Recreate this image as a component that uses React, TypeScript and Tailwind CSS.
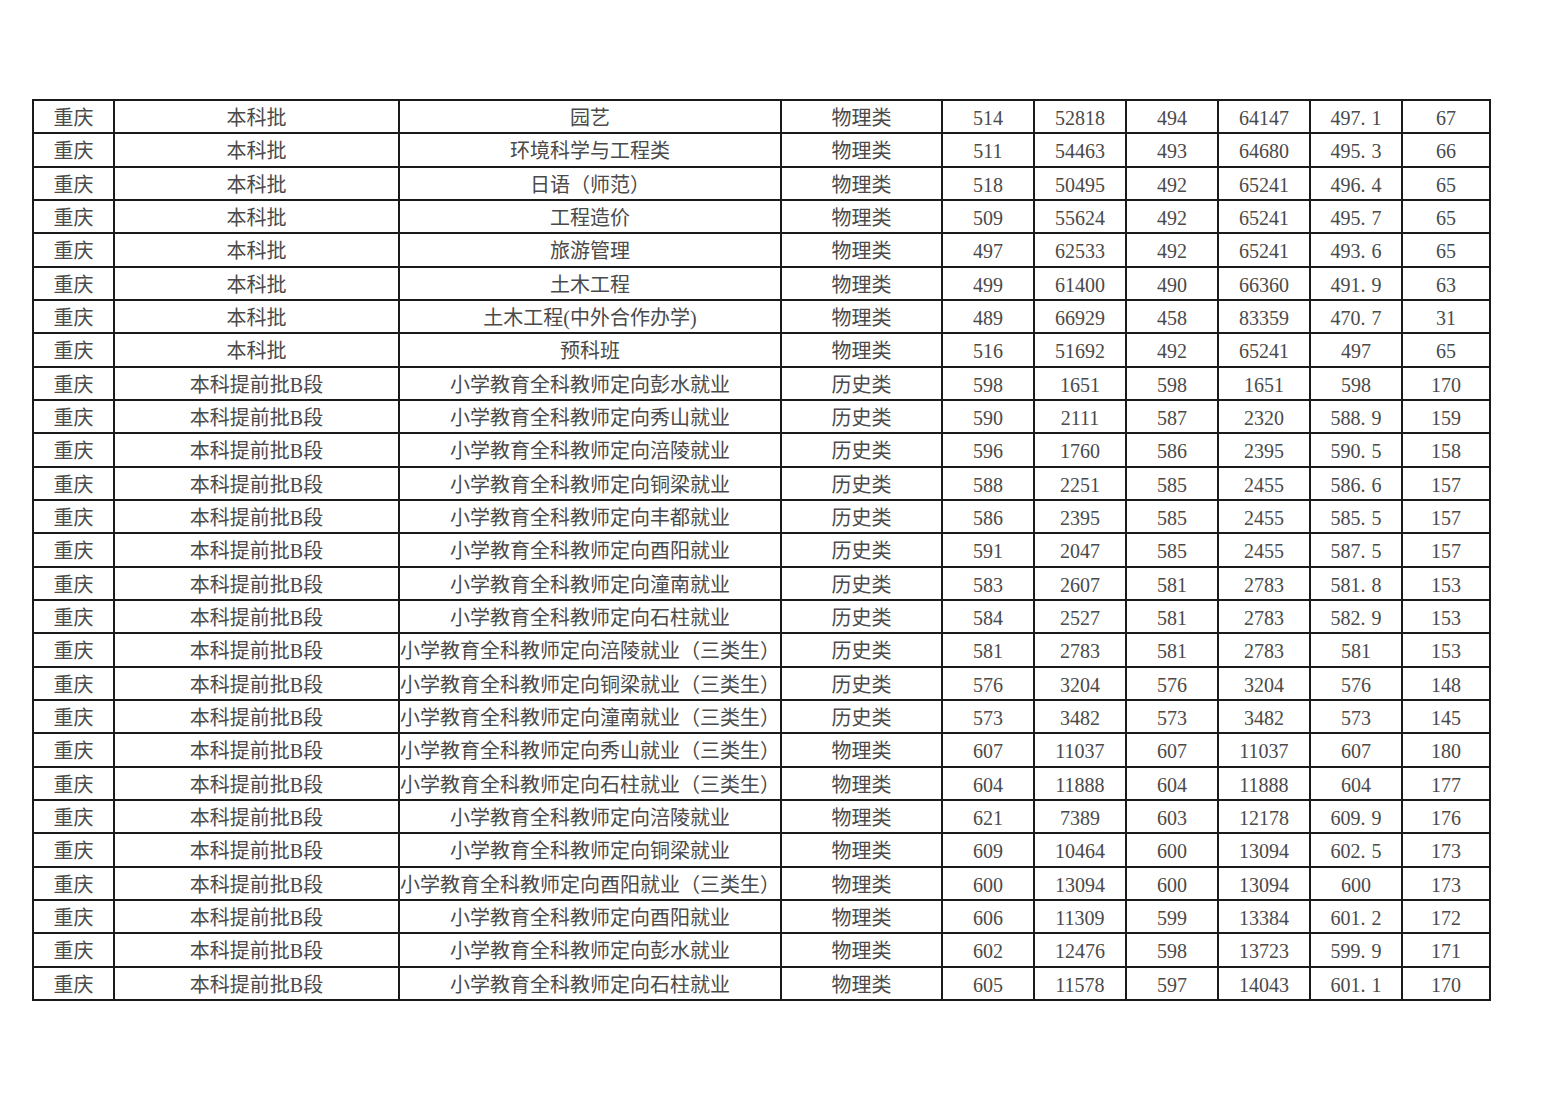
const rows: string[][] = [
  ['本科批', '园艺', '物理类', '514', '52818', '494', '64147', '497.1', '67'],
  ['本科批', '环境科学与工程类', '物理类', '511', '54463', '493', '64680', '495.3', '66'],
  ['本科批', '日语（师范）', '物理类', '518', '50495', '492', '65241', '496.4', '65'],
  ['本科批', '工程造价', '物理类', '509', '55624', '492', '65241', '495.7', '65'],
  ['本科批', '旅游管理', '物理类', '497', '62533', '492', '65241', '493.6', '65'],
  ['本科批', '土木工程', '物理类', '499', '61400', '490', '66360', '491.9', '63'],
  ['本科批', '土木工程(中外合作办学)', '物理类', '489', '66929', '458', '83359', '470.7', '31'],
  ['本科批', '预科班', '物理类', '516', '51692', '492', '65241', '497', '65'],
  ['本科提前批B段', '小学教育全科教师定向彭水就业', '历史类', '598', '1651', '598', '1651', '598', '170'],
  ['本科提前批B段', '小学教育全科教师定向秀山就业', '历史类', '590', '2111', '587', '2320', '588.9', '159'],
  ['本科提前批B段', '小学教育全科教师定向涪陵就业', '历史类', '596', '1760', '586', '2395', '590.5', '158'],
  ['本科提前批B段', '小学教育全科教师定向铜梁就业', '历史类', '588', '2251', '585', '2455', '586.6', '157'],
  ['本科提前批B段', '小学教育全科教师定向丰都就业', '历史类', '586', '2395', '585', '2455', '585.5', '157'],
  ['本科提前批B段', '小学教育全科教师定向酉阳就业', '历史类', '591', '2047', '585', '2455', '587.5', '157'],
  ['本科提前批B段', '小学教育全科教师定向潼南就业', '历史类', '583', '2607', '581', '2783', '581.8', '153'],
  ['本科提前批B段', '小学教育全科教师定向石柱就业', '历史类', '584', '2527', '581', '2783', '582.9', '153'],
  ['本科提前批B段', '小学教育全科教师定向涪陵就业（三类生）', '历史类', '581', '2783', '581', '2783', '581', '153'],
  ['本科提前批B段', '小学教育全科教师定向铜梁就业（三类生）', '历史类', '576', '3204', '576', '3204', '576', '148'],
  ['本科提前批B段', '小学教育全科教师定向潼南就业（三类生）', '历史类', '573', '3482', '573', '3482', '573', '145'],
  ['本科提前批B段', '小学教育全科教师定向秀山就业（三类生）', '物理类', '607', '11037', '607', '11037', '607', '180'],
  ['本科提前批B段', '小学教育全科教师定向石柱就业（三类生）', '物理类', '604', '11888', '604', '11888', '604', '177'],
  ['本科提前批B段', '小学教育全科教师定向涪陵就业', '物理类', '621', '7389', '603', '12178', '609.9', '176'],
  ['本科提前批B段', '小学教育全科教师定向铜梁就业', '物理类', '609', '10464', '600', '13094', '602.5', '173'],
  ['本科提前批B段', '小学教育全科教师定向酉阳就业（三类生）', '物理类', '600', '13094', '600', '13094', '600', '173'],
  ['本科提前批B段', '小学教育全科教师定向酉阳就业', '物理类', '606', '11309', '599', '13384', '601.2', '172'],
  ['本科提前批B段', '小学教育全科教师定向彭水就业', '物理类', '602', '12476', '598', '13723', '599.9', '171'],
  ['本科提前批B段', '小学教育全科教师定向石柱就业', '物理类', '605', '11578', '597', '14043', '601.1', '170'],
]

// 小数点在原图里显得很宽，用一点字距模拟
function Num({ v }: { v: string }) {
  const i = v.indexOf('.')
  if (i < 0) return <>{v}</>
  return (
    <>
      {v.slice(0, i)}
      <span className="tracking-[6px]">.</span>
      {v.slice(i + 1)}
    </>
  )
}

export default function App() {
  return (
    <div className="min-h-[1102px] bg-white pl-[32px] pt-[99px] font-['Liberation_Serif','Noto_Sans_CJK_SC',serif] text-[20px] text-[#4a4a4a]">
      <table className="table-fixed border-collapse border-2 border-[#1a1a1a]">
        <colgroup>
          <col className="w-[81px]" />
          <col className="w-[285px]" />
          <col className="w-[382px]" />
          <col className="w-[161px]" />
          <col className="w-[92px]" />
          <col className="w-[92px]" />
          <col className="w-[92px]" />
          <col className="w-[92px]" />
          <col className="w-[92px]" />
          <col className="w-[88px]" />
        </colgroup>
        <tbody>
          {rows.map((r, i) => (
            <tr key={i} className="h-[33.33px]">
              <td className="border-2 border-[#1a1a1a] p-0 pt-[3px] text-center leading-none">重庆</td>
              {r.map((c, j) => (
                <td
                  key={j}
                  className="whitespace-nowrap border-2 border-[#1a1a1a] p-0 pt-[3px] text-center leading-none"
                >
                  {j >= 3 ? <Num v={c} /> : c}
                </td>
              ))}
            </tr>
          ))}
        </tbody>
      </table>
    </div>
  )
}
